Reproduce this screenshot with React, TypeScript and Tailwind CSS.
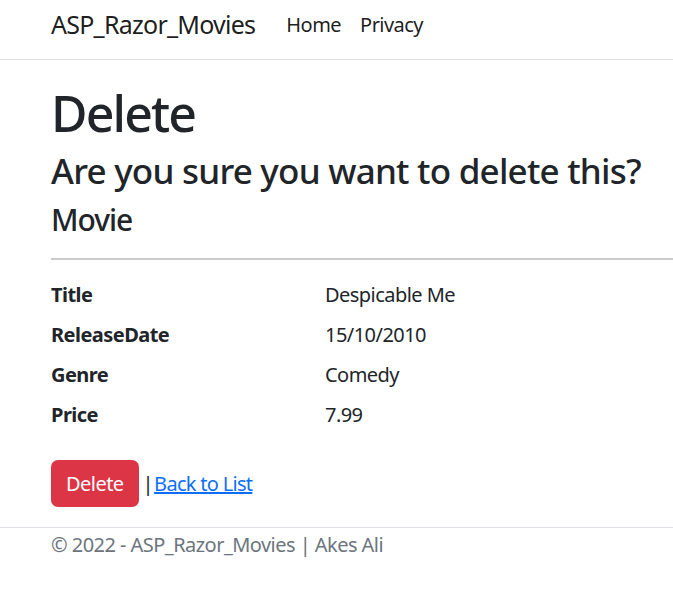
export default function App() {
  const rows = [
    { label: "Title", value: "Despicable Me" },
    { label: "ReleaseDate", value: "15/10/2010" },
    { label: "Genre", value: "Comedy" },
    { label: "Price", value: "7.99" },
  ];

  return (
    <div className="min-h-[597px] bg-white font-['Noto_Sans',sans-serif] text-[20px] leading-[30px] tracking-[-0.027em] text-[#212529]">
      {/* Navbar */}
      <header className="h-[60px] border-b border-[#dee2e6] mb-[23px]">
        <nav className="flex items-center h-full pl-[51px] pb-[10px]">
          <a className="text-[25px] leading-[37px] tracking-[-0.03em] text-black/90 mr-[31px]">
            ASP_Razor_Movies
          </a>
          <ul className="flex gap-[19px] text-black/90">
            <li>Home</li>
            <li>Privacy</li>
          </ul>
        </nav>
      </header>

      <main className="pl-[51px] pb-5">
        <h1 className="text-[50px] leading-[60px] font-medium tracking-[-0.037em] mb-[7px]">Delete</h1>
        <h3 className="text-[35px] leading-[42px] font-medium tracking-[-0.022em] mb-[10px]">
          Are you sure you want to delete this?
        </h3>
        <div>
          <h4 className="text-[30px] leading-[36px] font-medium tracking-[-0.035em] mt-[2px] mb-[8px]">
            Movie
          </h4>
          <hr className="my-5 border-0 h-[2px] bg-[#cbcbcc]" />
          <dl className="flex flex-col mb-5">
            {rows.map((r) => (
              <div key={r.label} className="flex mb-[10px]">
                <dt className="w-[274px] font-bold">{r.label}</dt>
                <dd>{r.value}</dd>
              </div>
            ))}
          </dl>
          <form className="flex items-center">
            <button
              type="button"
              className="h-[47px] px-[15px] rounded-[7px] bg-[#dc3545] text-white"
            >
              Delete
            </button>
            <span className="ml-[4px] mr-[1px]">|</span>
            <a className="text-[#0d6efd] underline tracking-[-0.035em]">Back to List</a>
          </form>
        </div>
      </main>

      <footer className="border-t border-[#dee2e6] pl-[51px] text-[#6c757d] leading-[34px]">
        © 2022 - ASP_Razor_Movies | Akes Ali
      </footer>
    </div>
  );
}
